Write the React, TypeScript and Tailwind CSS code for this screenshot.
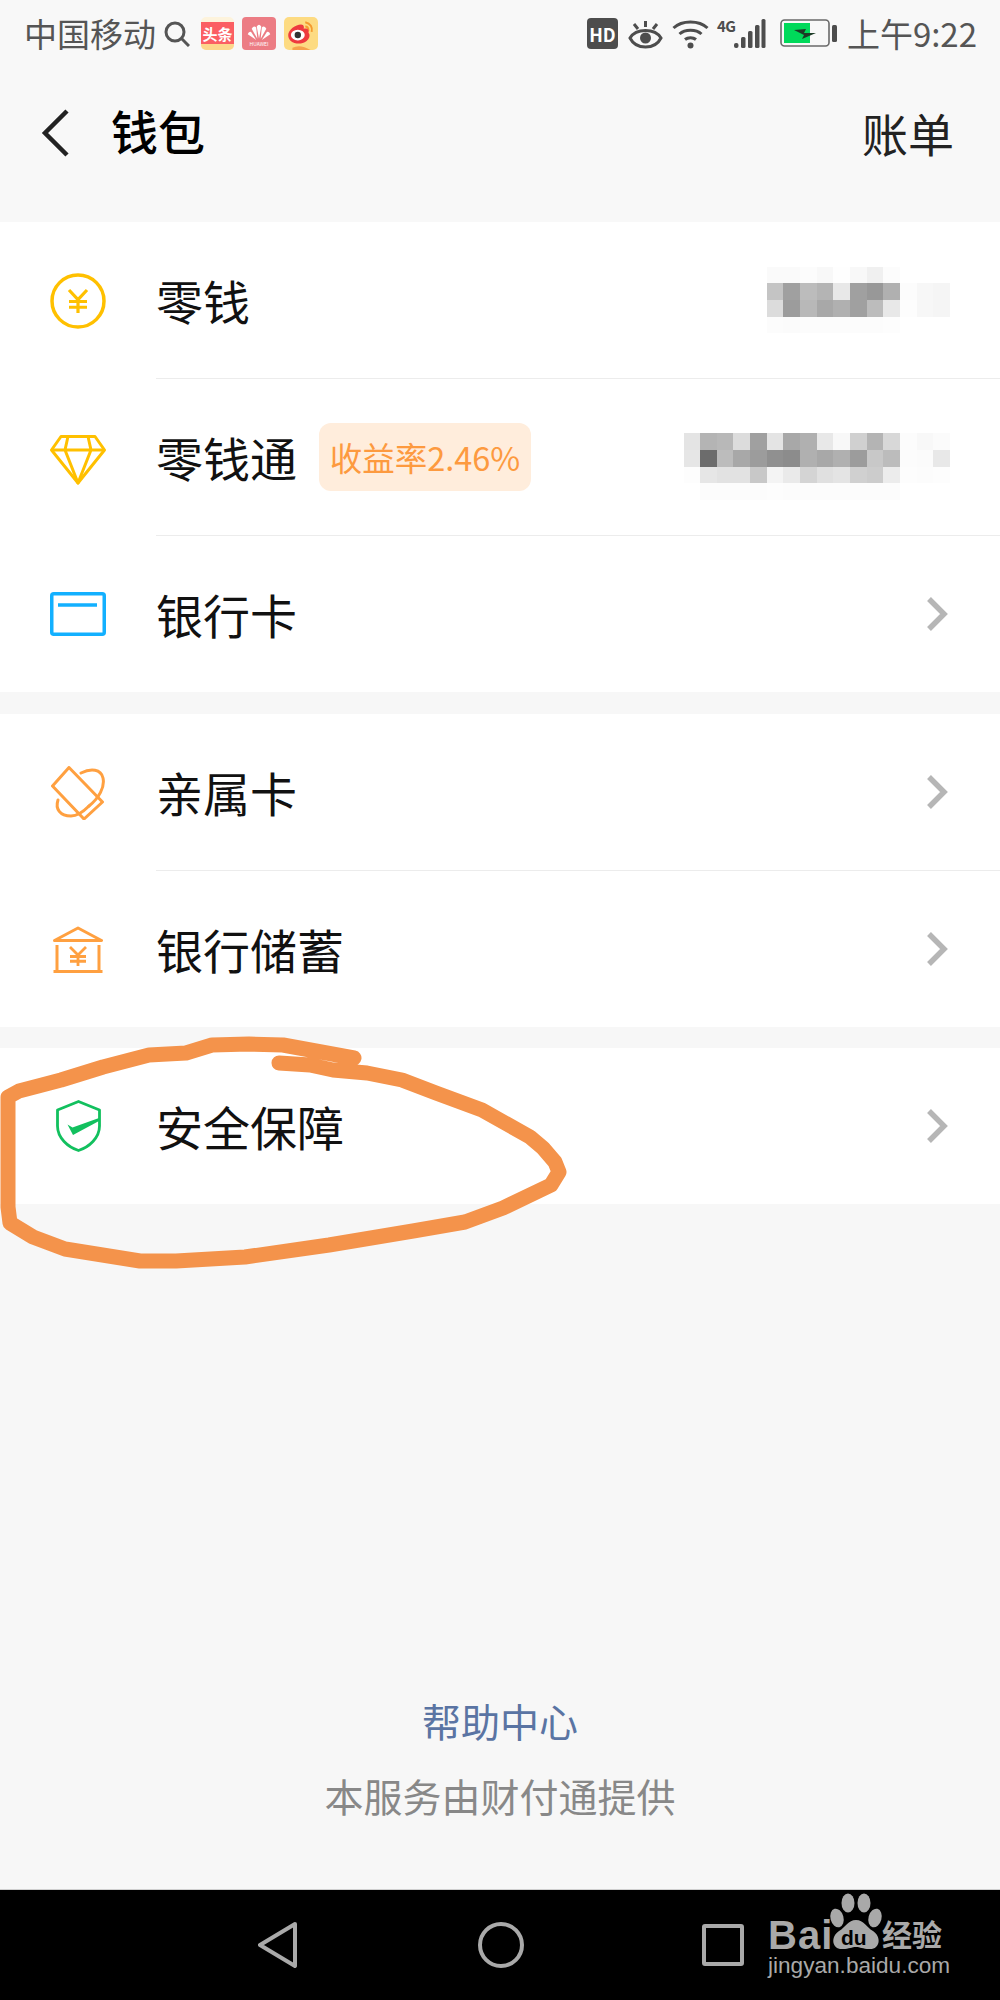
import type { ReactNode } from 'react'

const annotation =
  'M354 1058 L283 1045 L249 1044 L212 1045 L186 1053 L149 1055 L103 1067 L61 1080 L42 1085 L19 1091 L8 1097 L8 1207 L10 1223 L33 1237 L65 1249 L140 1261 L176 1261 L245 1257 L329 1245 L413 1231 L465 1222 L503 1208 L551 1185 L559 1172 L555 1162 L543 1148 L530 1137 L482 1110 L436 1093 L402 1080 L367 1073 L333 1070 L310 1065 L279 1063'

const mosaicOne = [
  [250, 250, 252, 248, 254, 248, 240, 252, 255, 255, 255],
  [196, 160, 188, 180, 232, 160, 152, 176, 252, 247, 245],
  [220, 156, 184, 168, 176, 160, 188, 232, 253, 247, 245],
  [252, 251, 252, 252, 252, 252, 252, 253, 255, 255, 255],
]

const mosaicTwo = [
  [228, 180, 184, 220, 160, 228, 168, 176, 232, 248, 208, 180, 216, 252, 248, 251],
  [230, 108, 188, 168, 156, 144, 140, 176, 168, 176, 156, 200, 188, 252, 251, 232],
  [253, 230, 226, 226, 200, 244, 234, 212, 224, 228, 208, 204, 236, 253, 252, 253],
  [255, 252, 252, 252, 252, 253, 252, 252, 252, 252, 252, 252, 252, 255, 255, 255],
]

function Mosaic({ cells }: { cells: number[][] }) {
  return (
    <div className="flex flex-col">
      {cells.map((row, y) => (
        <div key={y} className="flex">
          {row.map((v, x) => (
            <div key={x} className="h-[16.67px] w-[16.67px]" style={{ backgroundColor: `rgb(${v},${v},${v})` }} />
          ))}
        </div>
      ))}
    </div>
  )
}

function Chevron() {
  return (
    <svg className="mr-[2px]" width="22" height="34" viewBox="0 0 22 34" fill="none" stroke="#b6b6b6" strokeWidth="5.5">
      <path d="M3 2 L18 17 L3 32" />
    </svg>
  )
}

function Yuan({ x, y, w, h, color, sw }: { x: number; y: number; w: number; h: number; color: string; sw: number }) {
  const mid = x + w / 2
  return (
    <path
      d={`M${x} ${y} L${mid} ${y + h * 0.42} L${x + w} ${y} M${x} ${y + h * 0.5} H${x + w} M${x} ${y + h * 0.75} H${x + w} M${mid} ${y + h * 0.42} V${y + h}`}
      fill="none"
      stroke={color}
      strokeWidth={sw}
    />
  )
}

function CoinIcon() {
  return (
    <svg width="56" height="56" viewBox="0 0 56 56" fill="none">
      <circle cx="28" cy="28" r="26" stroke="#ffc000" strokeWidth="3.5" />
      <Yuan x={19} y={17} w={18} h={23} color="#ffc000" sw={3.2} />
    </svg>
  )
}

function DiamondIcon() {
  return (
    <svg className="mt-[4px]" width="56" height="50" viewBox="0 0 56 50" fill="none" stroke="#ffc000" strokeWidth="3" strokeLinejoin="round">
      <path d="M11 1.5 H45 L54.5 15 L28 48 L1.5 15 Z" />
      <path d="M1.5 15 H54.5 M18 1.5 L15 15 L28 48 L41 15 L38 1.5" />
    </svg>
  )
}

function CardIcon() {
  return (
    <svg width="56" height="44" viewBox="0 0 56 44" fill="none" stroke="#12b0ff" strokeWidth="3.5">
      <rect x="1.75" y="1.75" width="52.5" height="40.5" rx="2" />
      <path d="M8 13 H47" />
    </svg>
  )
}

function FamilyCardIcon() {
  return (
    <svg width="54" height="54" viewBox="0 0 54 54" fill="none" stroke="#ffa040" strokeWidth="3" strokeLinejoin="round" strokeLinecap="round">
      <path d="M18 1.5 L51.5 36 L33 53 L1.5 20 Z" />
      <path d="M30 7 C40 2 50 3 52 12 C54 21 48 32 38 40" />
      <path d="M7 34 C4 43 9 50 20 50 C26 50 32 46 38 40" />
    </svg>
  )
}

function BankIcon() {
  return (
    <svg width="50" height="47" viewBox="0 0 50 47" fill="none" stroke="#ffa040" strokeWidth="3">
      <path d="M1.5 14.5 L25 2 L48.5 14.5 Z" strokeLinejoin="round" />
      <path d="M4 19 V45 M46 19 V45 M0.5 45.5 H49.5" />
      <Yuan x={17} y={21} w={16} h={19} color="#ffa040" sw={2.8} />
    </svg>
  )
}

function ShieldIcon() {
  return (
    <svg width="45" height="52" viewBox="0 0 45 52" fill="none">
      <path d="M22.5 1.5 L43.5 10 V26 C43.5 38 33 47 22.5 50.5 C12 47 1.5 38 1.5 26 V10 Z" stroke="#12c05e" strokeWidth="2.8" strokeLinejoin="round" />
      <path d="M11.5 24.5 L16.5 27.5 L43 18 L43 21 L17 35 Z" fill="#12c05e" />
    </svg>
  )
}

function Row({ icon, label, last, badge, right }: { icon: ReactNode; label: string; last?: boolean; badge?: string; right?: ReactNode }) {
  return (
    <div className="flex">
      <div className="flex w-[156px] shrink-0 items-center justify-center">
        <div className="flex w-[56px] items-center justify-center">{icon}</div>
      </div>
      <div className={`flex flex-1 items-center justify-between pr-[50px] ${last ? 'h-[156px]' : 'h-[157px] border-b border-[#ececec]'}`}>
        <div className="flex items-center">
          <span className="-mt-[2px] text-[47px] leading-none text-[#111]">{label}</span>
          {badge && (
            <span className="ml-[22px] flex h-[68px] w-[212px] items-center justify-center rounded-[12px] bg-[#ffeddc] text-[32.5px] leading-none text-[#fd9a3f]">
              {badge}
            </span>
          )}
        </div>
        {right}
      </div>
    </div>
  )
}

function StatusBar() {
  return (
    <div className="flex h-[70px] items-start justify-between pl-[24px] pr-[23px] pt-[17px] text-[#555]">
      <div className="flex items-center">
        <span className="text-[33px] leading-[33px]">中国移动</span>
        <svg className="ml-[8px]" width="26" height="26" viewBox="0 0 26 26" fill="none" stroke="#555" strokeWidth="3">
          <circle cx="11" cy="11" r="9" />
          <path d="M17.5 17.5 L25 25" />
        </svg>
        <div className="ml-[11px] flex h-[33px] w-[33px] flex-col overflow-hidden rounded-[5px] bg-[#fdf3dc]">
          <div className="mt-[5px] flex h-[22px] items-center justify-center bg-[#fb5f63] text-[15px] font-bold leading-none text-white">头条</div>
          <div className="flex-1 bg-[#fdd78c]" />
        </div>
        <div className="ml-[8px] flex h-[33px] w-[34px] flex-col items-center justify-center rounded-[4px] bg-[#ec7c84] pt-[3px]">
          <svg width="26" height="18" viewBox="0 0 22 16" fill="#fff">
            <path d="M11 14 L9 3 Q11 0 13 3 Z" />
            <path d="M9.5 14 L4.5 5 Q6.5 2 8.5 4 Z" />
            <path d="M12.5 14 L17.5 5 Q15.5 2 13.5 4 Z" />
            <path d="M8.5 15 L1 10 Q2 7 4 8 Z" />
            <path d="M13.5 15 L21 10 Q20 7 18 8 Z" />
          </svg>
          <span className="text-[5px] leading-[6px] text-white">HUAWEI</span>
        </div>
        <div className="ml-[8px] flex h-[33px] w-[34px] items-center justify-center overflow-hidden rounded-[5px] bg-[#fddb82]">
          <svg width="32" height="32" viewBox="0 0 30 30" fill="none">
            <path d="M19 4 C24 5 26 9 25 13 M19 8 C21 8 22 10 22 12" stroke="#f59a2e" strokeWidth="1.8" />
            <path d="M3 16 C3 11 10 6 15 6 C18 6 18 9 17.5 10 C21 9 23 11 22 14 C24 15 24 23 13 24 C7 24 3 21 3 16 Z" fill="#ee3a3f" />
            <ellipse cx="12" cy="16" rx="6.5" ry="5" fill="#fff" />
            <circle cx="12" cy="16" r="3" fill="#333" />
            <path d="M7 28 Q14 24 24 30 H7 Z" fill="#f6a44c" />
          </svg>
        </div>
      </div>
      <div className="flex items-center">
        <div className="flex h-[31px] w-[31px] items-center justify-center rounded-[4px] bg-[#4d4d4d] text-[18px] font-bold leading-none text-white">HD</div>
        <svg className="ml-[10px]" width="35" height="30" viewBox="0 0 35 30" fill="none" stroke="#4d4d4d" strokeWidth="3">
          <path d="M2 19 C8 9 27 9 33 19 C27 31 8 31 2 19 Z" />
          <circle cx="17.5" cy="19" r="5.5" fill="#4d4d4d" stroke="none" />
          <path d="M17.5 2 V8 M6 5 L10 10 M29 5 L25 10" />
        </svg>
        <svg className="ml-[9px]" width="37" height="30" viewBox="0 0 37 30" fill="none" stroke="#4d4d4d" strokeWidth="3">
          <path d="M1.5 9 C10 1 27 1 35.5 9 M7.5 15 C13 10 24 10 29.5 15 M13 20.5 C16 18 21 18 24 20.5" />
          <circle cx="18.5" cy="26.5" r="3" fill="#4d4d4d" stroke="none" />
        </svg>
        <div className="relative ml-[8px] h-[31px] w-[49px]">
          <span className="absolute left-0 top-0 text-[15px] font-bold leading-none tracking-tight text-[#4d4d4d]">4G</span>
          <svg className="absolute left-[16px] top-0" width="33" height="31" viewBox="0 0 33 31" fill="#4d4d4d">
            <rect x="1" y="25" width="4.5" height="5" rx="2" />
            <rect x="8" y="19" width="4.5" height="11" rx="1.5" />
            <rect x="15" y="13" width="4.5" height="17" rx="1.5" />
            <rect x="22" y="7" width="4.5" height="23" rx="1.5" />
            <rect x="28.5" y="1" width="4" height="29" rx="1.5" />
          </svg>
        </div>
        <svg className="ml-[14px]" width="57" height="29" viewBox="0 0 57 29" fill="none">
          <rect x="1" y="1" width="48" height="26" rx="3.5" stroke="#6a6a6a" strokeWidth="1.6" />
          <rect x="4" y="4" width="26" height="20" fill="#00d95a" />
          <path d="M14 11 L26 10 L24 14 L36 14 L22 20 L24 16 Z" fill="#1c3a26" />
          <rect x="52" y="6" width="5" height="17" rx="1.5" fill="#4d4d4d" />
        </svg>
        <span className="ml-[10px] text-[33px] leading-[33px]">上午9:22</span>
      </div>
    </div>
  )
}

function Baidu() {
  return (
    <div className="absolute left-[768px] top-[1893px] h-[86px] w-[180px] text-[#a9a9a9]">
      <span className="absolute left-0 top-[22px] text-[40px] font-bold leading-none tracking-[1px]" style={{ fontFamily: '"Liberation Sans", sans-serif' }}>Bai</span>
      <svg className="absolute left-[60px] top-0" width="56" height="58" viewBox="0 0 56 58" fill="#a9a9a9">
        <ellipse cx="20" cy="10" rx="6.5" ry="9.5" />
        <ellipse cx="36" cy="10" rx="6.5" ry="9.5" />
        <ellipse cx="9" cy="25" rx="6.5" ry="9.5" transform="rotate(-15 9 25)" />
        <ellipse cx="47" cy="25" rx="6.5" ry="9.5" transform="rotate(15 47 25)" />
        <path d="M28 27 C36 27 38 34 45 38 C54 44 52 57 41 56 C35 56 32 54 28 54 C24 54 21 56 15 56 C4 57 2 44 11 38 C18 34 20 27 28 27 Z" />
      </svg>
      <span className="absolute left-[73px] top-[34px] text-[21px] font-bold leading-none text-black" style={{ fontFamily: '"Liberation Sans", sans-serif' }}>du</span>
      <span className="absolute left-[114px] top-[25px] text-[30px] font-bold leading-none">经验</span>
      <span className="absolute left-0 top-[62px] whitespace-nowrap text-[22.6px] leading-none" style={{ fontFamily: '"Liberation Sans", sans-serif' }}>jingyan.baidu.com</span>
    </div>
  )
}

export default function App() {
  return (
    <div
      className="relative flex h-[2000px] w-[1000px] flex-col overflow-hidden bg-[#f7f7f7]"
      style={{ fontFamily: '"Noto Sans CJK SC", "Noto Sans", sans-serif' }}
    >
      <div className="bg-[#f8f8f8]">
        <StatusBar />
        <div className="flex h-[152px] items-start justify-between pl-[41px] pr-[46px] pt-[39px]">
          <div className="flex items-center">
            <svg width="28" height="48" viewBox="0 0 28 48" fill="none" stroke="#222" strokeWidth="4.5">
              <path d="M26 2 L4 24 L26 46" />
            </svg>
            <span className="-mt-[6px] ml-[42px] text-[47px] font-medium leading-[52px] text-black">钱包</span>
          </div>
          <span className="-mt-[3px] text-[46px] leading-[52px] text-[#222]">账单</span>
        </div>
      </div>

      <div className="bg-white">
        <Row icon={<CoinIcon />} label="零钱" right={<Mosaic cells={mosaicOne} />} />
        <Row icon={<DiamondIcon />} label="零钱通" badge="收益率2.46%" right={<div className="mt-[19px]"><Mosaic cells={mosaicTwo} /></div>} />
        <Row icon={<CardIcon />} label="银行卡" last right={<Chevron />} />
      </div>

      <div className="mt-[22px] bg-white">
        <Row icon={<FamilyCardIcon />} label="亲属卡" right={<Chevron />} />
        <Row icon={<BankIcon />} label="银行储蓄" last right={<Chevron />} />
      </div>

      <div className="mt-[21px] bg-white">
        <Row icon={<ShieldIcon />} label="安全保障" last right={<Chevron />} />
      </div>

      <div className="mt-auto flex flex-col items-center pb-[74px]">
        <span className="text-[39px] leading-none text-[#5a74a3]">帮助中心</span>
        <span className="mt-[36px] text-[39px] leading-none text-[#888]">本服务由财付通提供</span>
      </div>

      <div className="flex h-[111px] items-center border-t border-[#cfcfcf] bg-black pl-[258px]">
        <svg width="40" height="46" viewBox="0 0 40 46" fill="none" stroke="#a9a9a9" strokeWidth="4" strokeLinejoin="round">
          <path d="M37 2 L2 23 L37 44 Z" />
        </svg>
        <svg className="ml-[180px]" width="46" height="46" viewBox="0 0 46 46" fill="none" stroke="#a9a9a9" strokeWidth="4">
          <circle cx="23" cy="23" r="21" />
        </svg>
        <div className="ml-[178px] h-[42px] w-[42px] rounded-[3px] border-4 border-[#a9a9a9]" />
      </div>

      <svg className="pointer-events-none absolute left-0 top-0" width="1000" height="2000" viewBox="0 0 1000 2000" fill="none">
        <path d={annotation} stroke="#f4934b" strokeWidth="15" strokeLinecap="round" strokeLinejoin="round" />
      </svg>

      <Baidu />
    </div>
  )
}
